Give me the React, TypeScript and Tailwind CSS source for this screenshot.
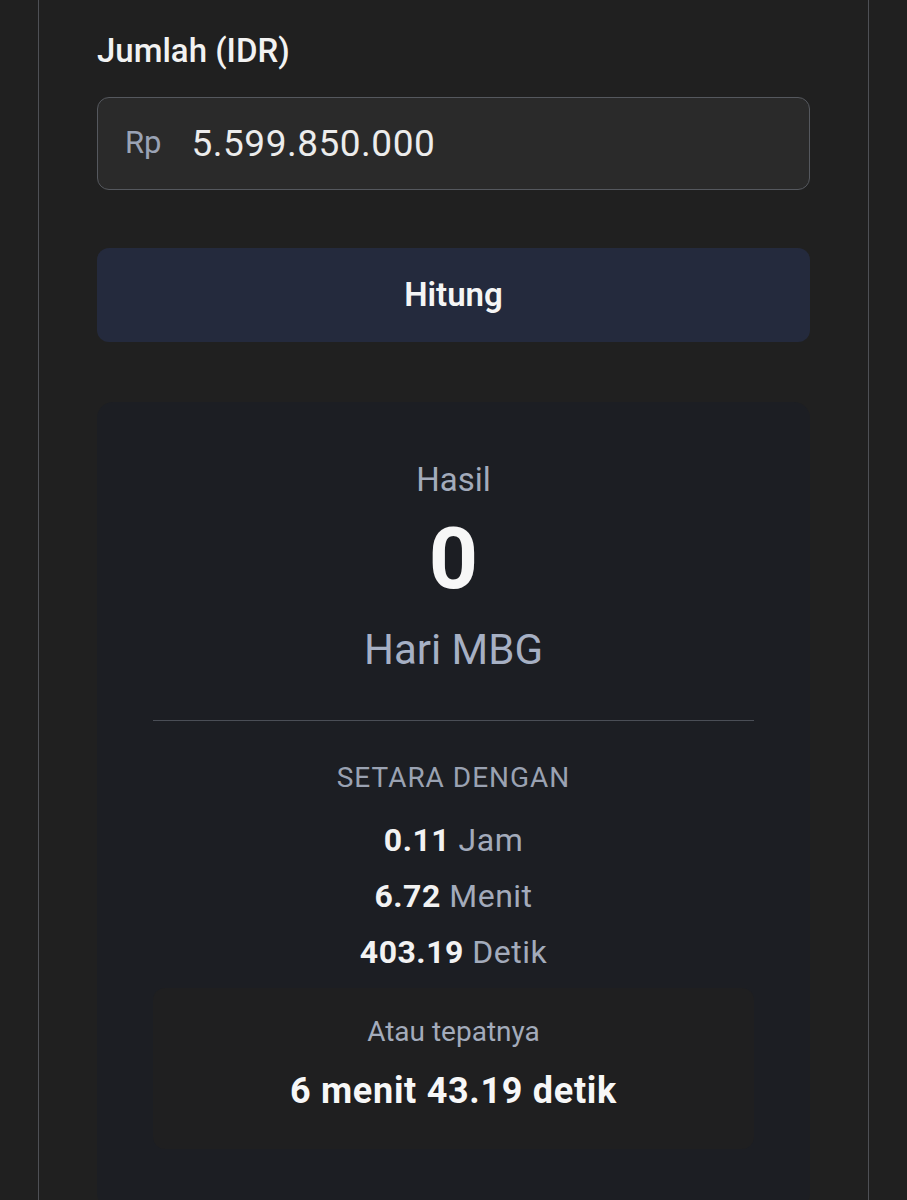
import React from "react";

const rows = [
  { value: "0.11", unit: "Jam" },
  { value: "6.72", unit: "Menit" },
  { value: "403.19", unit: "Detik" },
];

export default function App() {
  return (
    <div className="min-h-[1200px] bg-[#202020] font-['Roboto',sans-serif] overflow-hidden">
      <div className="mx-[38px] border-x border-[#4e5055] px-[58px] pt-[31px] pb-[60px] min-h-[1200px]">
        <label className="block text-[33px] leading-[40px] font-medium text-[#f2f2f2]">Jumlah (IDR)</label>

        <div className="mt-[26px] h-[93px] flex items-center rounded-[12px] border border-[#55585e] bg-[#2a2a2a] pl-[27px]">
          <span className="text-[31px] text-[#9aa3b5]">Rp</span>
          <span className="ml-[30px] text-[37px] tracking-[0.5px] text-[#ececec]">5.599.850.000</span>
        </div>

        <button className="mt-[58px] w-full h-[94px] rounded-[12px] bg-[#242a3d] text-[33px] font-semibold text-[#f5f5f5]">
          Hitung
        </button>

        <div className="mt-[60px] rounded-[16px] bg-[#1c1e23] px-[56px] pt-[58px] pb-[60px] text-center">
          <div className="text-[33px] leading-[40px] text-[#a3abbb]">Hasil</div>
          <div className="mt-[9px] text-[86px] leading-[100px] font-bold text-[#f7f7f7]">0</div>
          <div className="mt-[17px] text-[42px] leading-[48px] text-[#a6b0c4]">Hari MBG</div>

          <div className="mt-[46px] h-px bg-[#4a4e56]" />

          <div className="mt-[39px] text-[28px] leading-[36px] tracking-[0.035em] uppercase text-[#9aa2b2]">Setara dengan</div>

          <div className="mt-[16px] flex flex-col">
            {rows.map((r) => (
              <div key={r.unit} className="text-[32px] leading-[56px] tracking-[0.5px]">
                <span className="font-bold text-[#f2f2f2]">{r.value}</span>{" "}
                <span className="text-[#a3abbb]">{r.unit}</span>
              </div>
            ))}
          </div>

          <div className="mt-[8px] rounded-[12px] bg-[#1f1f20] pt-[26px] pb-[36px]">
            <div className="text-[28px] leading-[36px] text-[#a3abbb]">Atau tepatnya</div>
            <div className="mt-[19px] text-[36px] leading-[44px] tracking-[0.7px] font-bold text-[#f7f7f7]">6 menit 43.19 detik</div>
          </div>
        </div>
      </div>
    </div>
  );
}
